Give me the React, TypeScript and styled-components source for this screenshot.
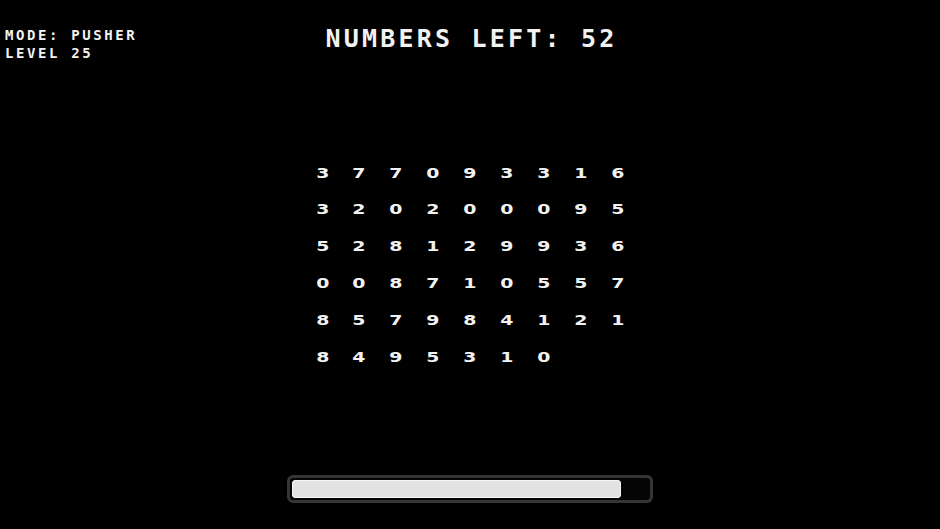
import React from "react";
import styled, { createGlobalStyle } from "styled-components";

const GlobalStyle = createGlobalStyle`
  html, body {
    margin: 0;
    padding: 0;
    background: #000;
  }
  body {
    font-family: "DejaVu Sans Mono", "Liberation Mono", monospace;
    color: #f2f2f2;
  }
`;

const Screen = styled.div`
  width: 940px;
  height: 529px;
  background: #000;
  display: flex;
  flex-direction: column;
  align-items: center;
  overflow: hidden;
`;

const Header = styled.div`
  width: 100%;
  box-sizing: border-box;
  margin-top: 26px;
  padding: 0 5px;
  display: grid;
  grid-template-columns: 1fr auto 1fr;
  align-items: start;
`;

const Hud = styled.div`
  font-size: 14px;
  line-height: 18px;
  font-weight: bold;
  letter-spacing: 2.6px;
  text-transform: uppercase;
`;

const Title = styled.h1`
  margin: 0;
  font-size: 25px;
  line-height: 1;
  font-weight: bold;
  letter-spacing: 3.2px;
  margin-right: -3px;
  text-transform: uppercase;
`;

const Board = styled.div`
  margin-top: 92.6px;
  display: grid;
  grid-template-columns: repeat(9, 36.9px);
  grid-auto-rows: 36.9px;
`;

const Cell = styled.div`
  display: flex;
  align-items: center;
  justify-content: center;
  font-family: "DejaVu Sans", "Liberation Sans", sans-serif;
  font-size: 14px;
  font-weight: bold;
  line-height: 36.9px;
`;

const Digit = styled.span`
  display: inline-block;
  transform: scaleX(1.35);
`;

const Track = styled.div`
  margin-top: 99px;
  width: 366px;
  height: 28px;
  box-sizing: border-box;
  border: 3px solid #353535;
  border-radius: 6px;
  padding: 2px;
  background: #050505;
`;

const Fill = styled.div`
  height: 100%;
  box-sizing: border-box;
  background: #e2e2e2;
  border: 1px solid #f6f6f6;
  border-radius: 3px;
`;

const rows = [
  "377093316",
  "320200095",
  "528129936",
  "008710557",
  "857984121",
  "8495310",
];

const numbersLeft = rows.join("").length;
const progress = 0.924;

export default function App() {
  return (
    <>
      <GlobalStyle />
      <Screen>
        <Header>
          <Hud>
            <div>Mode: Pusher</div>
            <div>Level 25</div>
          </Hud>
          <Title>Numbers Left: {numbersLeft}</Title>
          <div />
        </Header>
        <Board>
          {rows.flatMap((row, r) =>
            row.split("").map((d, c) => (
              <Cell key={`${r}-${c}`}>
                <Digit>{d}</Digit>
              </Cell>
            ))
          )}
        </Board>
        <Track>
          <Fill style={{ width: `${progress * 100}%` }} />
        </Track>
      </Screen>
    </>
  );
}
